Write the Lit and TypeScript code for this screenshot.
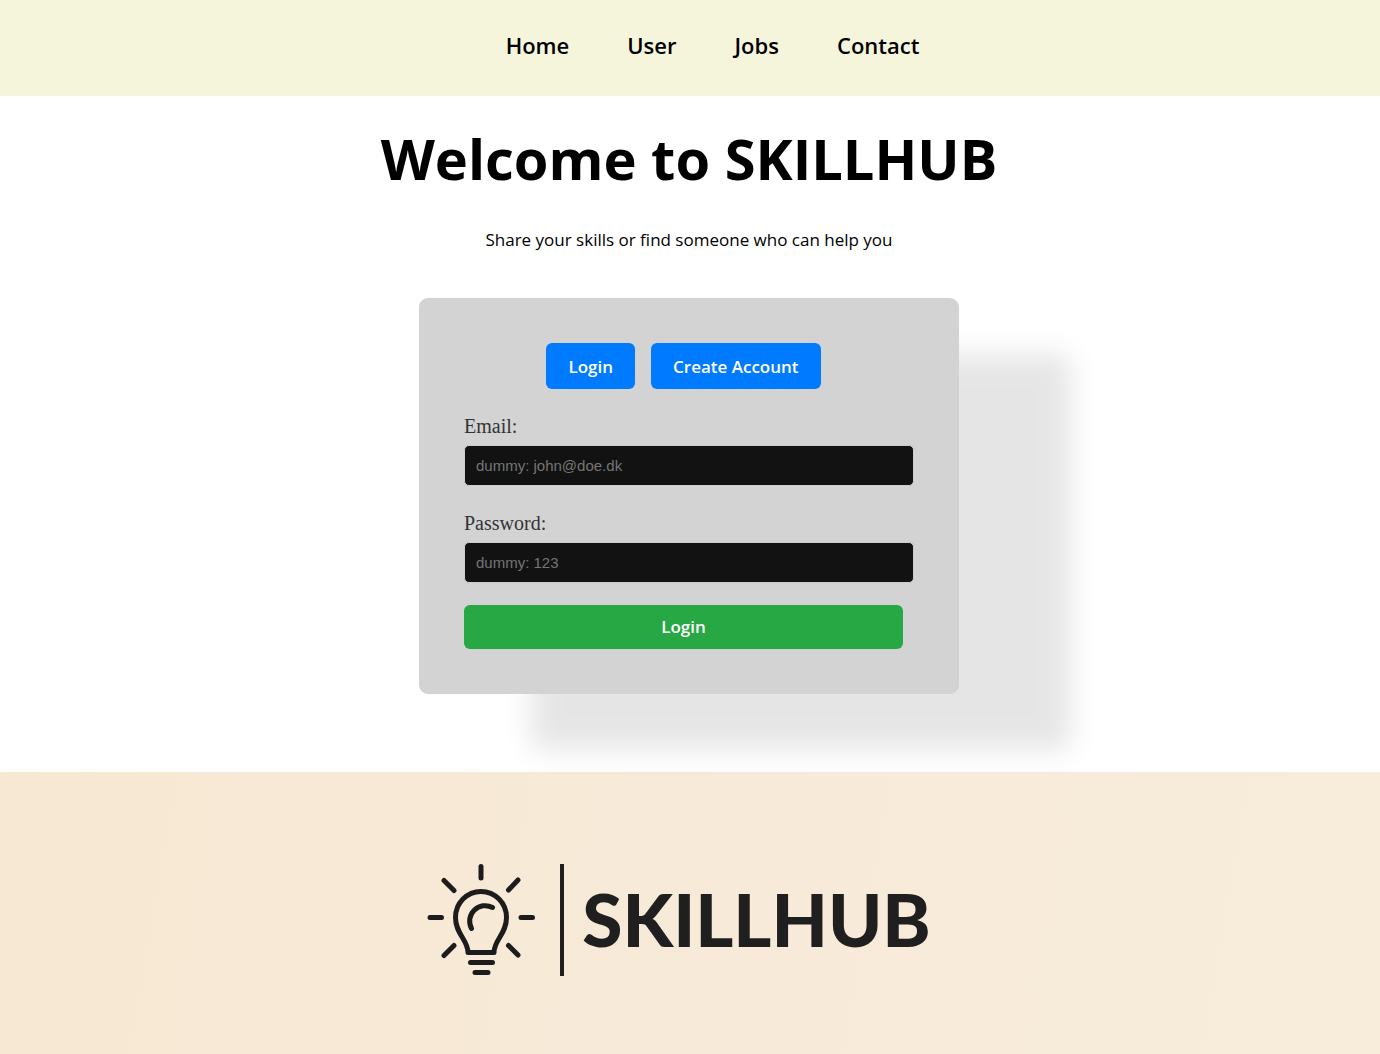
import { LitElement, html, css, svg } from "lit";
import { customElement, state } from "lit/decorators.js";

type Mode = "login" | "create";

@customElement("site-nav")
class SiteNav extends LitElement {
  static styles = css`
    :host {
      display: block;
      background: #f5f5dc;
    }
    .links {
      display: flex;
      justify-content: center;
      gap: 58px;
      margin: 0;
      padding: 30px 0 36px 45px;
      list-style: none;
    }
    .link {
      color: #000;
      font-size: 22px;
      font-weight: 600;
      line-height: 30px;
      text-decoration: none;
    }
  `;

  render() {
    return html`
      <nav>
        <ul class="links">
          ${["Home", "User", "Jobs", "Contact"].map(
            (name) => html`<li><a class="link" href="#${name.toLowerCase()}">${name}</a></li>`
          )}
        </ul>
      </nav>
    `;
  }
}

@customElement("login-card")
class LoginCard extends LitElement {
  @state() private mode: Mode = "login";

  static styles = css`
    :host {
      display: block;
      box-sizing: border-box;
      width: 100%;
      max-width: 540px;
      padding: 45px;
      border-radius: 9px;
      background: #d3d3d3;
      box-shadow: 112px 56px 28px rgba(0, 0, 0, 0.1);
    }
    .tabs {
      display: flex;
      justify-content: center;
      gap: 16px;
      margin: 0 11px 22px 0;
    }
    .tab,
    .submit {
      border: 0;
      border-radius: 6px;
      color: #fff;
      font-family: inherit;
      font-size: 17px;
      font-weight: 600;
      cursor: pointer;
    }
    .tab {
      padding: 12px 22px 10px;
      background: #007bff;
      line-height: 24px;
    }
    .form {
      display: flex;
      flex-direction: column;
      text-align: left;
    }
    .label {
      margin-bottom: 4px;
      color: #333;
      font-family: Georgia, "Liberation Serif", serif;
      font-size: 20px;
      line-height: 30px;
    }
    .field {
      box-sizing: border-box;
      width: 100%;
      height: 41px;
      margin: 0 0 22px;
      padding: 0 11px;
      border: 1px solid #ccc;
      border-radius: 5px;
      background: #121212;
      color: #fff;
      font-family: "Liberation Sans", Arial, sans-serif;
      font-size: 15px;
    }
    .field::placeholder {
      color: #757575;
    }
    .submit {
      margin-right: 11px;
      padding: 10px 22px;
      background: #28a745;
      line-height: 24px;
    }
  `;

  render() {
    return html`
      <div class="tabs">
        <button class="tab" type="button" @click=${() => (this.mode = "login")}>Login</button>
        <button class="tab" type="button" @click=${() => (this.mode = "create")}>Create Account</button>
      </div>
      <form class="form" @submit=${(e: Event) => e.preventDefault()}>
        <label class="label" for="email">Email:</label>
        <input class="field" id="email" type="email" placeholder="dummy: john@doe.dk" />
        <label class="label" for="password">Password:</label>
        <input class="field" id="password" type="password" placeholder="dummy: 123" />
        <button class="submit" type="submit">${this.mode === "login" ? "Login" : "Create"}</button>
      </form>
    `;
  }
}

const bulb = svg`
  <g fill="none" stroke="#1c1c1c" stroke-width="5" stroke-linecap="round" stroke-linejoin="round">
    <path d="M54 3.500V15M17 17.500L27 27.500M91 17L81.500 27M3 54.500H14.500M94 54.500H105.500M27 82.500L17 92.500M81.500 82.500L91 92" />
    <path d="M41 89.500C41 77 28.500 71 28.500 54.500A25.500 26 0 0 1 79.500 54.500C79.500 71 67 77 67 89.500Z" />
    <path d="M65.500 44.500A15.500 15.500 0 0 0 44.500 65.500" />
    <path d="M43.500 99.500H65.500M48 109.500H61" />
  </g>
`;

@customElement("brand-banner")
class BrandBanner extends LitElement {
  static styles = css`
    :host {
      display: block;
      background: linear-gradient(100deg, #f7e8d3, #f7ead8 50%, #f8ecdb);
    }
    .logo {
      display: flex;
      align-items: center;
      justify-content: center;
      padding: 91px 22px 78px 0;
      color: #1f1f1f;
    }
    .bulb {
      width: 108px;
      height: 113px;
    }
    .divider {
      width: 4px;
      height: 112px;
      margin: 0 18px 0 25px;
      background: #1f1f1f;
    }
    .name {
      font-family: Lato, sans-serif;
      font-size: 73px;
      font-weight: 900;
      line-height: 113px;
    }
  `;

  render() {
    return html`
      <div class="logo">
        <svg class="bulb" viewBox="0 0 108 113" aria-hidden="true">${bulb}</svg>
        <span class="divider"></span>
        <span class="name">SKILLHUB</span>
      </div>
    `;
  }
}

@customElement("app-root")
class AppRoot extends LitElement {
  static styles = css`
    :host {
      display: block;
      background: #fff;
      color: #000;
      font-family: "Segoe UI", "Open Sans", sans-serif;
    }
    .welcome {
      display: flex;
      flex-direction: column;
      align-items: center;
      padding: 22px 2px 78px 0;
      text-align: center;
    }
    .title {
      margin: 0;
      font-size: 56px;
      font-weight: 700;
      line-height: 80px;
    }
    .tagline {
      margin: 30px 0 46px;
      font-size: 17px;
      line-height: 24px;
    }
  `;

  render() {
    return html`
      <header><site-nav></site-nav></header>
      <main class="welcome">
        <h1 class="title">Welcome to SKILLHUB</h1>
        <p class="tagline">Share your skills or find someone who can help you</p>
        <login-card></login-card>
      </main>
      <footer><brand-banner></brand-banner></footer>
    `;
  }
}
